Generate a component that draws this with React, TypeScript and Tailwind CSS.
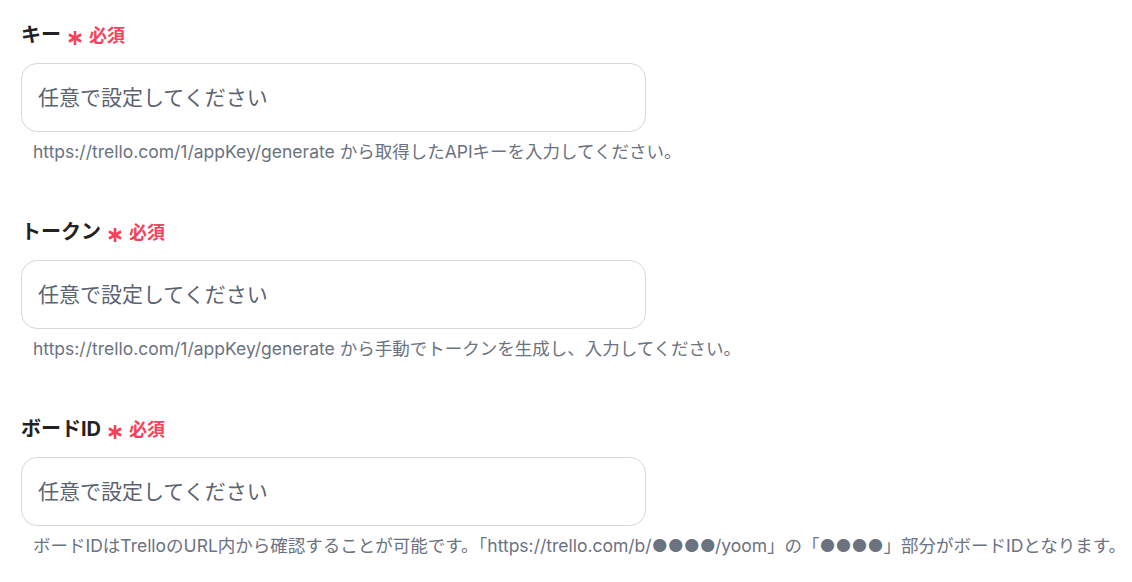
import React from "react";

const font = { fontFamily: 'Inter, "Noto Sans CJK JP", sans-serif' };

function Star() {
  return (
    <svg width="16" height="16" viewBox="0 0 16 16" className="ml-[6px] mt-[5px]" aria-hidden="true">
      <g stroke="#f5425a" strokeWidth="2.6" strokeLinecap="butt">
        <line x1="8" y1="1" x2="8" y2="15" />
        <line x1="1.94" y1="4.5" x2="14.06" y2="11.5" />
        <line x1="1.94" y1="11.5" x2="14.06" y2="4.5" />
      </g>
    </svg>
  );
}

function Field({ label, help }: { label: string; help: React.ReactNode }) {
  return (
    <div className="flex flex-col">
      <div className="flex items-center h-[30px]">
        <span className="text-[20px] leading-[30px] font-bold text-[#222222]">{label}</span>
        <Star />
        <span className="ml-[6px] text-[#f5425a] text-[18px] font-bold">必須</span>
      </div>
      <div className="mt-[13px] w-[625px] h-[69px] rounded-[16px] border border-[#d4d7dc] bg-white flex items-center px-[16px]">
        <span className="text-[21px] text-[#5b6270]">任意で設定してください</span>
      </div>
      <div className="mt-[9px] ml-[12px] text-[17.5px] text-[#6b7280] leading-[22px] whitespace-nowrap">{help}</div>
    </div>
  );
}

export default function App() {
  return (
    <div className="w-[1132px] h-[582px] bg-white overflow-hidden pl-[21px] pt-[20px] flex flex-col gap-[54px]" style={font}>
      <Field label="キー" help="https://trello.com/1/appKey/generate から取得したAPIキーを入力してください。" />
      <Field label="トークン" help="https://trello.com/1/appKey/generate から手動でトークンを生成し、入力してください。" />
      <Field
        label="ボードID"
        help="ボードIDはTrelloのURL内から確認することが可能です。「https://trello.com/b/●●●●/yoom」の「●●●●」部分がボードIDとなります。"
      />
    </div>
  );
}
